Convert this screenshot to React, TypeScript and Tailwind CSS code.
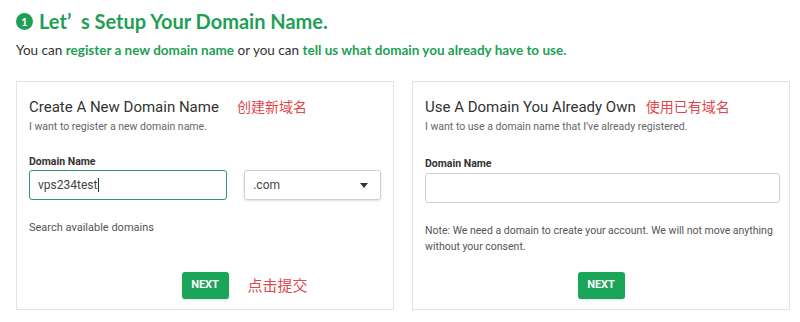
import React from 'react';

const GREEN = 'text-[#1e9f55]';

function NextButton({ note }: { note?: string }) {
  return (
    <div className="mt-auto flex justify-center">
      <div className="relative">
        <button className="h-[27px] w-[47px] rounded-[3px] bg-[#1aa558] text-[11px] font-bold text-white shadow-sm">
          NEXT
        </button>
        {note && (
          <span className="absolute left-full top-[3px] ml-[19px] whitespace-nowrap text-[15px] text-[#e0474c] [font-family:'Noto_Sans_CJK_SC',sans-serif]">
            {note}
          </span>
        )}
      </div>
    </div>
  );
}

export default function App() {
  return (
    <div className="h-[322px] w-[800px] overflow-hidden bg-white pl-4 pr-[10px] pt-[7px] text-[#333] [font-family:Roboto,'Noto_Sans_CJK_SC',sans-serif]">
      {/* page heading */}
      <h1 className={`flex items-center gap-[6px] text-[20px] font-bold leading-[28px] ${GREEN} [font-family:Lato,sans-serif]`}>
        <span className="flex h-[17px] w-[17px] items-center justify-center rounded-full bg-[#1e9f55] text-[11px] leading-none text-white">1</span>
        Let’&nbsp; s Setup Your Domain Name.
      </h1>
      <p className="mt-[6px] text-[13.5px] leading-[18px] text-[#333] [font-family:Lato,sans-serif]">
        You can <b className={GREEN}>register a new domain name</b> or you can{' '}
        <b className={GREEN}>tell us what domain you already have to use.</b>
      </p>

      <div className="mt-[22px] flex gap-[18px]">
        {/* new domain */}
        <div className="flex h-[229px] w-[378px] flex-col border border-[#e3e3e3] px-3 pb-[10px] pt-[14px]">
          <div className="flex items-baseline">
            <h2 className="text-[15px] leading-[22px] text-[#333]">Create A New Domain Name</h2>
            <span className="ml-[18px] text-[14px] text-[#e0474c]">创建新域名</span>
          </div>
          <p className="mt-[2px] text-[10.5px] leading-[14px] text-[#666]">I want to register a new domain name.</p>
          <label className="mt-[21px] text-[10.5px] font-bold leading-[14px] text-[#333]">Domain Name</label>
          <div className="mt-[1px] flex gap-[17px]">
            <div className="flex h-[30px] w-[200px] items-center rounded-[3px] border border-[#2e9a6c] px-[8px] text-[12px] text-[#444]">
              vps234test<span className="ml-px h-[14px] w-px bg-[#333]" />
            </div>
            <div className="flex h-[30px] w-[138px] items-center justify-between rounded-[3px] border border-[#cfcfcf] px-[8px] text-[12px] text-[#444] shadow-sm">
              .com
              <svg width="8" height="5" viewBox="0 0 8 5" className="mr-[4px]"><path d="M0 0h8L4 5z" fill="#333" /></svg>
            </div>
          </div>
          <p className="mt-[21px] text-[11px] leading-[14px] text-[#555]">Search available domains</p>
          <NextButton note="点击提交" />
        </div>

        {/* existing domain */}
        <div className="flex h-[229px] w-[378px] flex-col border border-[#e3e3e3] px-3 pb-[10px] pt-[14px]">
          <div className="flex items-baseline">
            <h2 className="text-[15px] leading-[22px] text-[#333]">Use A Domain You Already Own</h2>
            <span className="ml-[10px] text-[14px] text-[#e0474c]">使用已有域名</span>
          </div>
          <p className="mt-[2px] text-[10.5px] leading-[14px] text-[#666]">I want to use a domain name that I’ve already registered.</p>
          <label className="mt-[23px] text-[10.5px] font-bold leading-[14px] text-[#333]">Domain Name</label>
          <div className="mt-[2px] h-[30px] w-[355px] rounded-[3px] border border-[#cfcfcf]" />
          <p className="mt-[20px] text-[10.5px] leading-[16px] text-[#555]">
            Note: We need a domain to create your account. We will not move anything without your consent.
          </p>
          <NextButton />
        </div>
      </div>
    </div>
  );
}
